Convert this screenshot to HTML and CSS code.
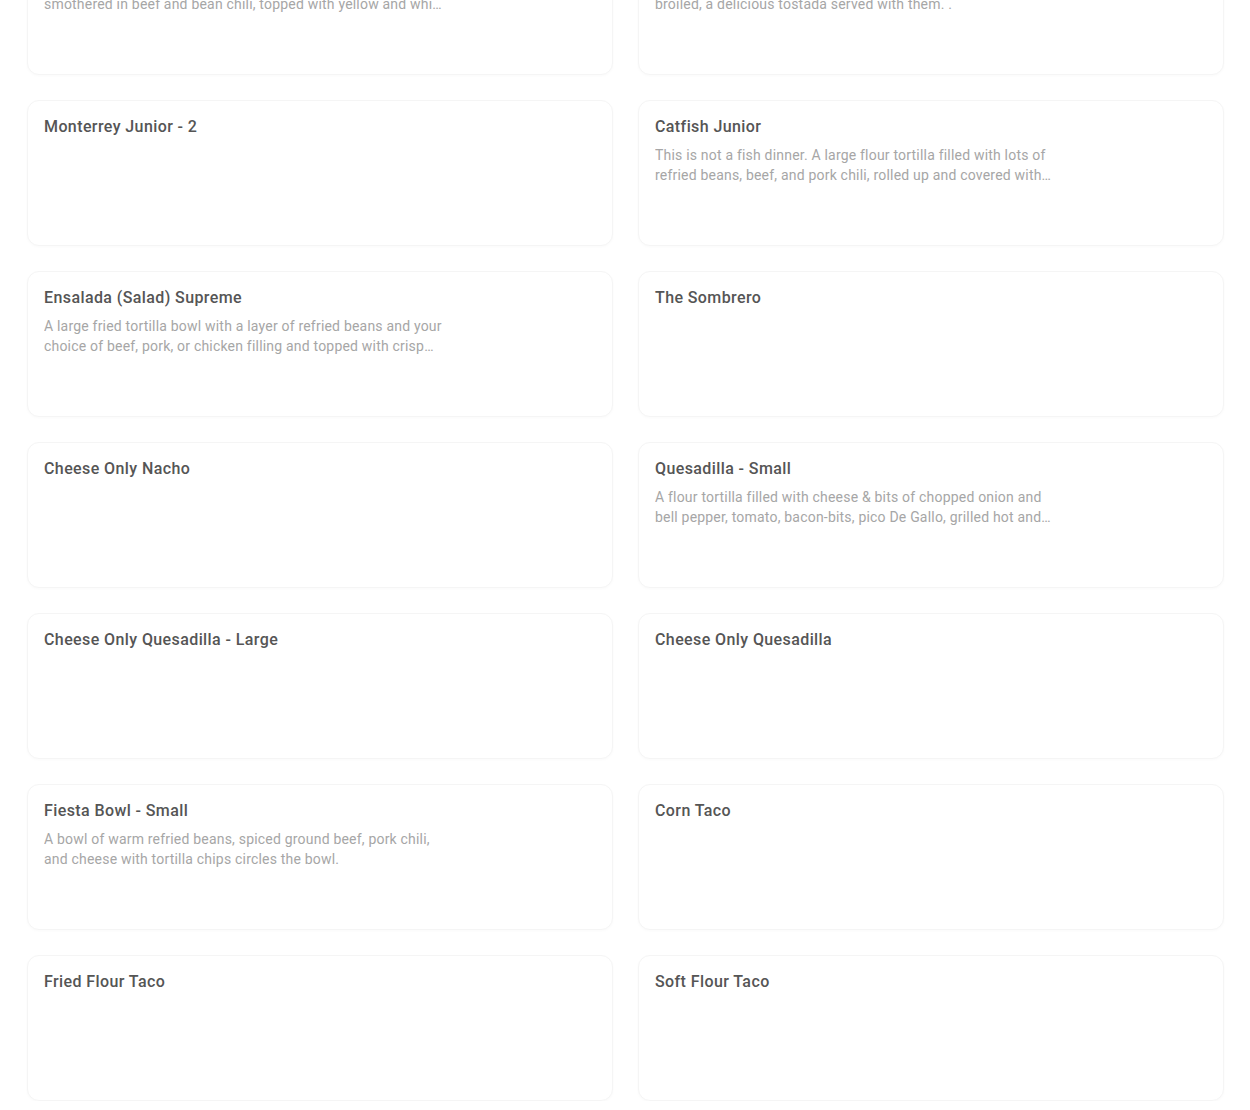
FILE: index.html
```html
<!DOCTYPE html>
<html lang="en">
<head>
    <meta charset="UTF-8">
    <meta name="viewport" content="width=device-width, initial-scale=1.0">
    <title>Menu</title>
    <link rel="stylesheet" href="styles.css">
</head>
<body>
    <div class="menu">
        <div class="item">
            <h3>Enchilada Dinner</h3>
            <p>Two corn tortillas filled with cheese and onion, rolled up and smothered in beef and bean chili, topped with yellow and white cheese and baked until bubbly.</p>
        </div>
        <div class="item">
            <h3>Tostada Plate</h3>
            <p>Crispy corn tortillas layered with refried beans and cheese, broiled, a delicious tostada served with them. .</p>
        </div>

        <div class="item">
            <h3>Monterrey Junior - 2</h3>
        </div>
        <div class="item">
            <h3>Catfish Junior</h3>
            <p>This is not a fish dinner. A large flour tortilla filled with lots of refried beans, beef, and pork chili, rolled up and covered with cheese and sauce.</p>
        </div>

        <div class="item">
            <h3>Ensalada (Salad) Supreme</h3>
            <p>A large fried tortilla bowl with a layer of refried beans and your choice of beef, pork, or chicken filling and topped with crisp lettuce, tomato and cheese.</p>
        </div>
        <div class="item">
            <h3>The Sombrero</h3>
        </div>

        <div class="item">
            <h3>Cheese Only Nacho</h3>
        </div>
        <div class="item">
            <h3>Quesadilla - Small</h3>
            <p>A flour tortilla filled with cheese &amp; bits of chopped onion and bell pepper, tomato, bacon-bits, pico De Gallo, grilled hot and served with sour cream.</p>
        </div>

        <div class="item">
            <h3>Cheese Only Quesadilla - Large</h3>
        </div>
        <div class="item">
            <h3>Cheese Only Quesadilla</h3>
        </div>

        <div class="item">
            <h3>Fiesta Bowl - Small</h3>
            <p>A bowl of warm refried beans, spiced ground beef, pork chili, and cheese with tortilla chips circles the bowl.</p>
        </div>
        <div class="item">
            <h3>Corn Taco</h3>
        </div>

        <div class="item">
            <h3>Fried Flour Taco</h3>
        </div>
        <div class="item">
            <h3>Soft Flour Taco</h3>
        </div>
    </div>
</body>
</html>
```

FILE: styles.css
```css
body {
    margin: 0;
    font-family: Roboto, "Liberation Sans", sans-serif;
    background: #ffffff;
    overflow: hidden;
}
.menu {
    display: grid;
    grid-template-columns: 1fr 1fr;
    gap: 25px;
    padding: 0 26px 0 27px;
    margin-top: -71px;
}
.item {
    box-sizing: border-box;
    height: 146px;
    padding: 16px;
    border: 1px solid #f5f5f5;
    border-radius: 12px;
    box-shadow: 0 1px 3px rgba(0,0,0,0.025);
    background: #fff;
}
.item h3 {
    margin: 0;
    font-size: 16px;
    line-height: 20px;
    font-weight: 500;
    letter-spacing: 0.4px;
    color: #555555;
}
.item p {
    margin: 8px 0 0;
    max-width: 402px;
    font-size: 14px;
    line-height: 20px;
    letter-spacing: 0.2px;
    color: #a6a6a6;
    display: -webkit-box;
    -webkit-line-clamp: 2;
    -webkit-box-orient: vertical;
    overflow: hidden;
}
```
